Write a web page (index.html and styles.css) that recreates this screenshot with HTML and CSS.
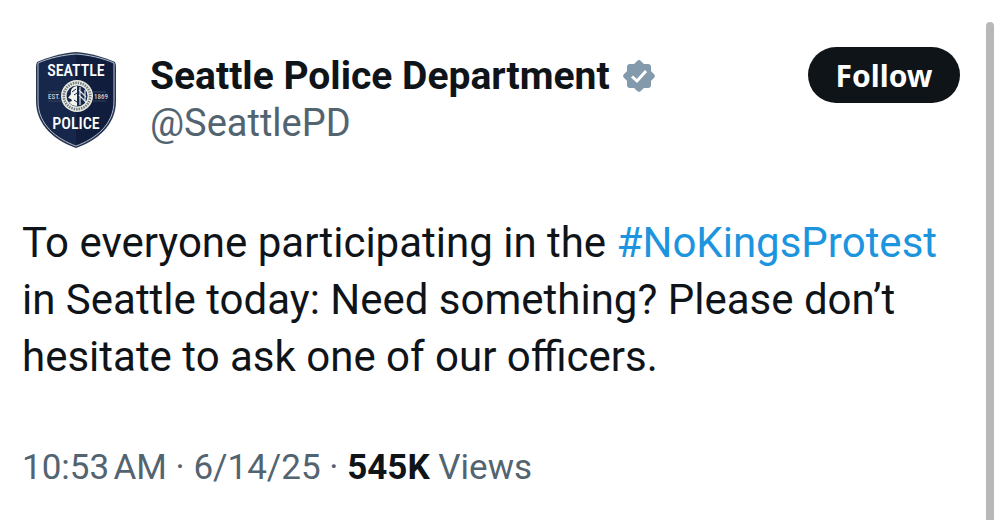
FILE: index.html
```html
<!DOCTYPE html>
<html lang="en">
<head>
<meta charset="utf-8">
<title>Seattle Police Department</title>
<link rel="stylesheet" href="styles.css">
</head>

<body>
<div class="page">
	<article class="tweet">
		<header class="head">
			<svg class="avatar" viewBox="0 0 82 98" role="img" aria-label="Seattle Police badge">
				<path d="M41 1 C54 2 69 6 80 11 Q81 13 81 17 V50 C81 75 61 90 41 97 C21 90 1 75 1 50 V17 Q1 13 2 11 C13 6 28 2 41 1Z" fill="#26344f"/>
				<path d="M41 3 C54 4 68 7 79 12 V50 C79 74 60 88 41 95 C22 88 3 74 3 50 V12 C14 7 28 4 41 3Z" fill="#16274b" stroke="#b4bdcc" stroke-width="1"/>
				<path d="M41 4 C54 5 67 8 78 13 V50 C78 73 60 87 41 94Z" fill="#101d3c"/>
				<g class="badge-name">
					<text x="41" y="25">SEATTLE</text>
					<text x="41" y="78">POLICE</text>
				</g>
				<g class="badge-year">
					<text x="19" y="48">EST.</text>
					<text x="66" y="48">1869</text>
				</g>
				<path d="M13 41H26M13 50H26M58 41H71M58 50H71" stroke="#34455a" stroke-width="1"/>
				<circle cx="42" cy="45" r="16" fill="#e9ebdf"/>
				<circle cx="42" cy="45" r="13.2" fill="none" stroke="#4a5668" stroke-width="2.6" stroke-dasharray="1.5 1" opacity=".75"/>
				<circle cx="42" cy="45" r="10.5" fill="#14264a"/>
				<path d="M42 35 V55 C38 55 35 53 34 51 L37 50 L36 48 L33 47 L36 43 C35 39 38 35 42 35Z" fill="#f2f3ec"/>
				<path d="M37 41L41 38M39 44L42 42M39 49L42 51" stroke="#14264a" stroke-width="1"/>
				<path d="M45 36V54M50 39V51M44 39L51 46M44 44L51 51" fill="none" stroke="#dfe5e8" stroke-width="1.2"/>
			</svg>
			<div class="who">
				<div class="name">
					<span>Seattle Police Department</span>
					<svg class="verified" viewBox="0 0 34 34" role="img" aria-label="Verified">
						<g fill="#829aab">
							<rect x="5" y="5" width="24" height="24" rx="3"/>
							<rect x="5" y="5" width="24" height="24" rx="3" transform="rotate(45 17 17)"/>
						</g>
						<path d="M10 17.5L15 22L24 12" fill="none" stroke="#fff" stroke-width="3"/>
					</svg>
				</div>
				<a class="handle" href="#">@SeattlePD</a>
			</div>
			<button class="follow" type="button">Follow</button>
		</header>
		<p class="text">To everyone participating in the <a href="#">#NoKingsProtest</a> in Seattle today: Need something? Please don’t hesitate to ask one of our officers.</p>
		<div class="meta">10:53&#8239;AM · 6/14/25 · <b>545K</b> Views</div>
	</article>
	<div class="bar"></div>
</div>
</body>
</html>
```
FILE: styles.css
```css
*{ margin:0; padding:0; box-sizing:border-box;}
body{ background:#fff; color:#0f1419; font-family:Roboto, "Liberation Sans", sans-serif;}
a{ color:#1d94de; text-decoration:none;}
.page{ display:flex; min-height:100vh; padding:22px 6px 0 22px; overflow:hidden;}
.tweet{ flex:1; min-width:0; padding-top:24px;}
.bar{ width:8px; background:#b8b8b8; border-radius:4px 4px 0 0;}

.head{ display:flex; align-items:flex-start; padding:0 26px 0 13px;}
.avatar{ width:82px; height:98px; margin:5px 33px 0 0; flex:none;}
.badge-name{ font:500 16px "Roboto Condensed", Roboto, sans-serif; fill:#fff; text-anchor:middle;}
.badge-year{ font:500 7px "Roboto Condensed", Roboto, sans-serif; fill:#c9d0d8; text-anchor:middle;}
.who{ flex:1; min-width:0; padding-top:6px;}
.name{ display:flex; align-items:center; gap:12px; font-size:39px; line-height:48px; font-weight:bold; white-space:nowrap;}
.verified{ width:34px; height:34px; flex:none;}
.handle{ display:block; color:#536471; font-size:38px; line-height:46px;}
.follow{ width:152px; height:56px; margin-top:1px; border:0; border-radius:28px; background:#0f1419; color:#fff; font:bold 30px "Noto Sans", sans-serif;}

.text{ margin-top:65px; padding-right:26px; font-size:42px; line-height:57px;}
.meta{ margin-top:59px; color:#536471; font-size:35px; line-height:48px;}
.meta b{ color:#0f1419;}
```
